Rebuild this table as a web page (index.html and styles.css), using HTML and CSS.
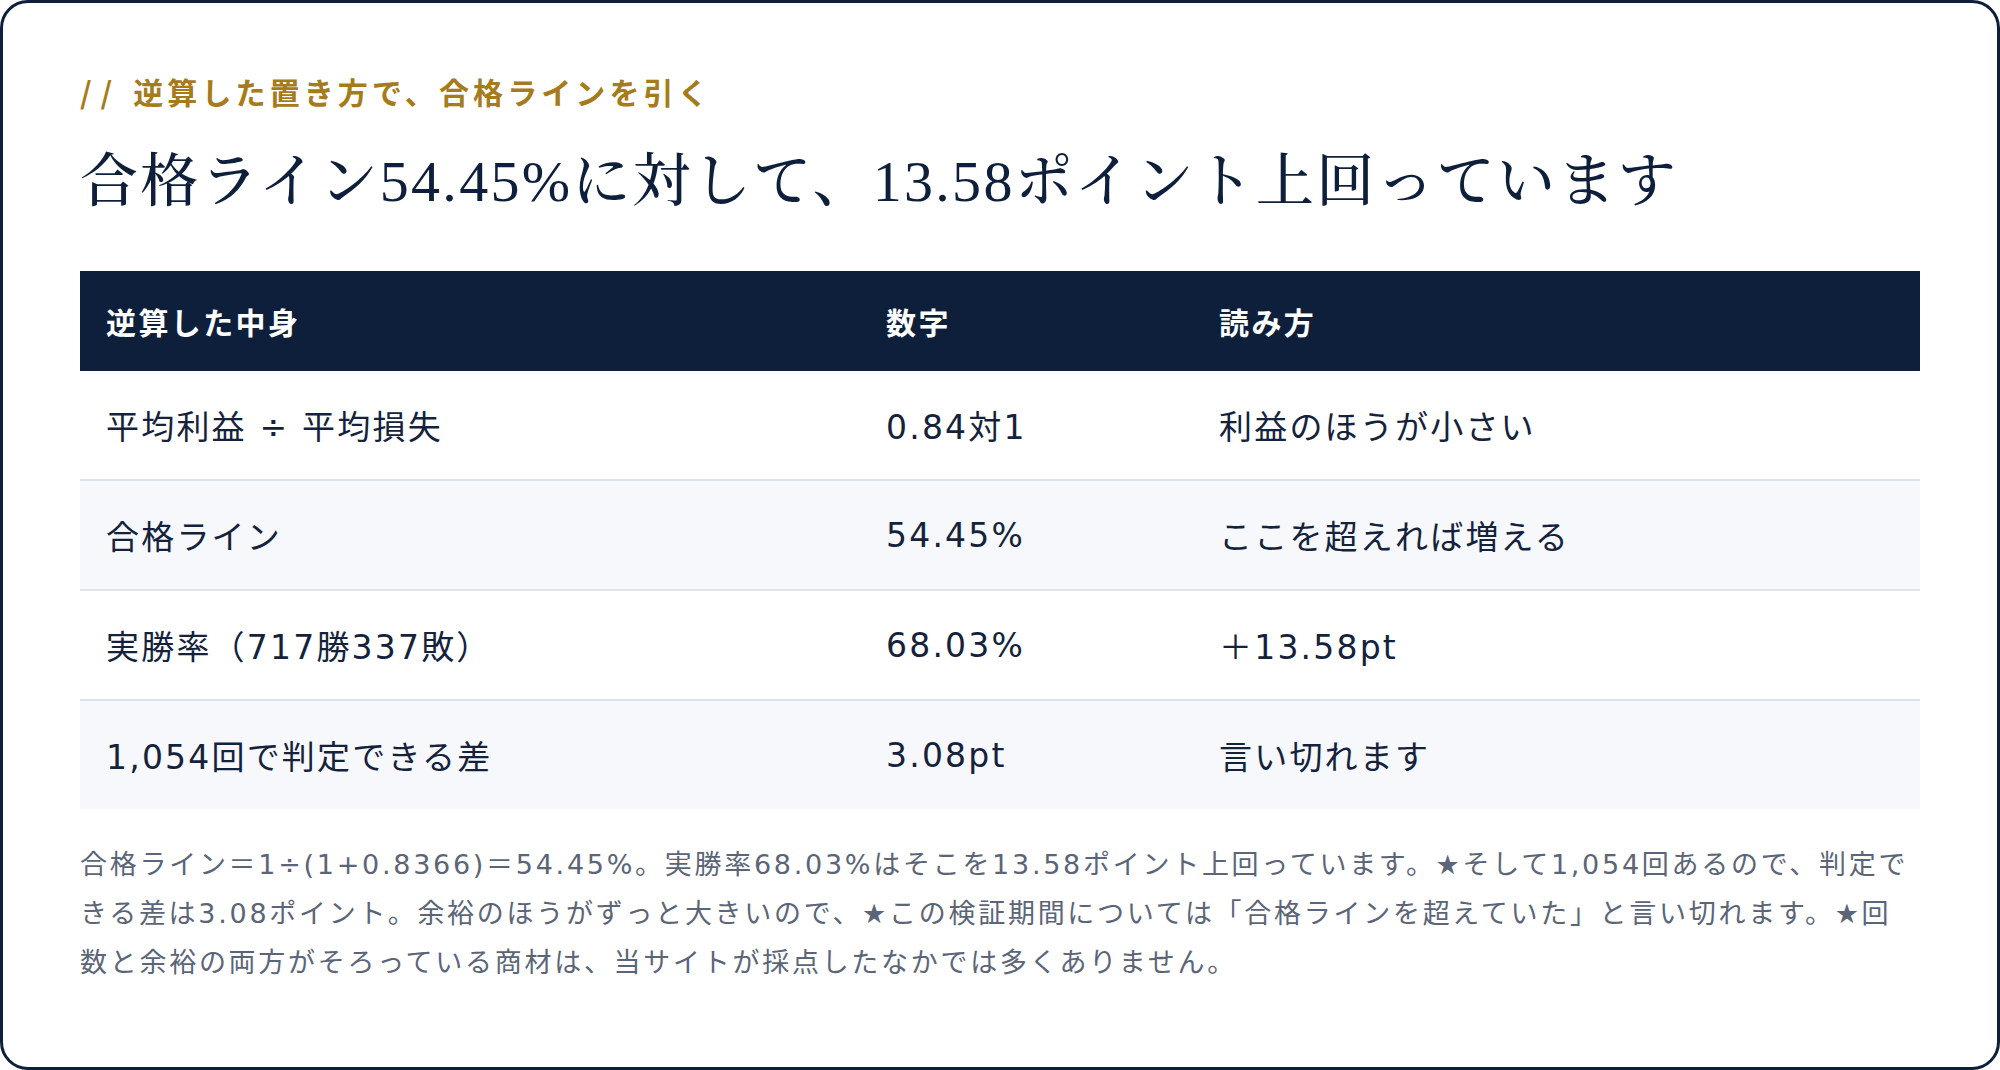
FILE: index.html
```html
<!DOCTYPE html>
<html lang="ja">
<head>
<meta charset="utf-8">
<title>合格ライン</title>
<link rel="stylesheet" href="styles.css">
</head>
<body>
<section class="card">
  <p class="eyebrow"><span class="slashes">//</span>逆算した置き方で、合格ラインを引く</p>
  <h1 class="title">合格ライン54.45%に対して、13.58ポイント上回っています</h1>
  <table class="data">
    <thead>
      <tr>
        <th class="c1">逆算した中身</th>
        <th class="c2">数字</th>
        <th class="c3">読み方</th>
      </tr>
    </thead>
    <tbody>
      <tr><td>平均利益 ÷ 平均損失</td><td>0.84対1</td><td>利益のほうが小さい</td></tr>
      <tr><td>合格ライン</td><td>54.45%</td><td>ここを超えれば増える</td></tr>
      <tr><td>実勝率（717勝337敗）</td><td>68.03%</td><td>＋13.58pt</td></tr>
      <tr><td>1,054回で判定できる差</td><td>3.08pt</td><td>言い切れます</td></tr>
    </tbody>
  </table>
  <p class="note">合格ライン＝1÷(1+0.8366)＝54.45%。実勝率68.03%はそこを13.58ポイント上回っています。★そして1,054回あるので、判定できる差は3.08ポイント。余裕のほうがずっと大きいので、★この検証期間については「合格ラインを超えていた」と言い切れます。★回数と余裕の両方がそろっている商材は、当サイトが採点したなかでは多くありません。</p>
</section>
</body>
</html>
```

FILE: styles.css
```css
html, body {
  margin: 0;
  padding: 0;
  background: #ffffff;
}

body {
  font-family: "DejaVu Sans", "Noto Sans CJK JP", sans-serif;
  color: #0e1f3b;
}

.card {
  box-sizing: border-box;
  width: 2000px;
  height: 1070px;
  border: 3px solid #0e1f3b;
  border-radius: 28px;
  padding: 68px 77px 0 77px;
  background: #ffffff;
}

.eyebrow {
  margin: 0;
  font-family: "Noto Sans CJK JP", sans-serif;
  font-size: 30px;
  line-height: 40px;
  font-weight: 700;
  letter-spacing: 4.1px;
  color: #a67b1b;
}

.slashes {
  letter-spacing: 9px;
  margin-right: 12px;
}

.title {
  margin: 30px 0 0 0;
  font-family: "Liberation Serif", "Noto Serif CJK JP", serif;
  font-size: 58px;
  line-height: 81px;
  font-weight: 500;
  letter-spacing: 2.3px;
  color: #0e1f3b;
}

.data {
  margin-top: 49px;
  width: 100%;
  border-collapse: collapse;
  table-layout: fixed;
}

.data th {
  background: #0e1f3b;
  color: #ffffff;
  font-family: "Noto Sans CJK JP", sans-serif;
  font-size: 30px;
  font-weight: 700;
  text-align: left;
  height: 100px;
  padding: 0 26px;
  letter-spacing: 2.4px;
}

.c1 { width: 728px; }
.c2 { width: 281px; }

.data td {
  font-size: 33px;
  letter-spacing: 2.2px;
  color: #14223c;
  height: 108px;
  padding: 0 26px;
  border-top: 2px solid #dde3ea;
}

.data tbody tr:first-child td {
  border-top: none;
}

.data tbody tr:nth-child(even) td {
  background: #f6f8fb;
}

.note {
  margin: 31px 0 0 0;
  font-size: 27px;
  line-height: 49px;
  letter-spacing: 2.72px;
  color: #5b6577;
}
```
